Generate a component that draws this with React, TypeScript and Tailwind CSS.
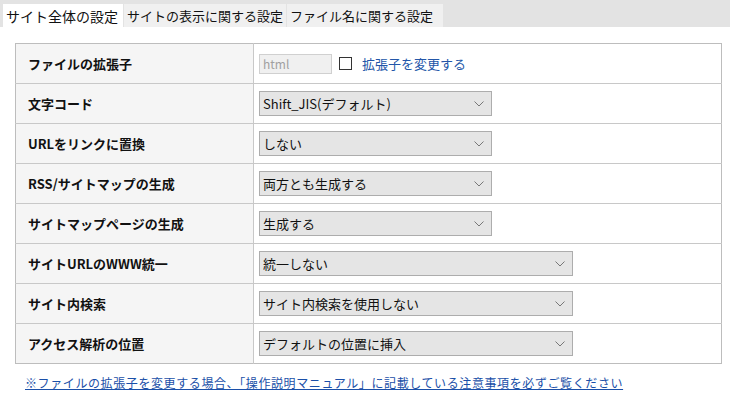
import React from 'react';

const tabs = ['サイト全体の設定', 'サイトの表示に関する設定', 'ファイル名に関する設定'];

interface Row {
  label: string;
  value: string;
  wide?: boolean;
}

const rows: Row[] = [
  { label: '文字コード', value: 'Shift_JIS(デフォルト)' },
  { label: 'URLをリンクに置換', value: 'しない' },
  { label: 'RSS/サイトマップの生成', value: '両方とも生成する' },
  { label: 'サイトマップページの生成', value: '生成する' },
  { label: 'サイトURLのWWW統一', value: '統一しない', wide: true },
  { label: 'サイト内検索', value: 'サイト内検索を使用しない', wide: true },
  { label: 'アクセス解析の位置', value: 'デフォルトの位置に挿入', wide: true },
];

function FakeSelect({ value, wide }: { value: string; wide?: boolean }) {
  return (
    <div
      className={`${wide ? 'w-[314px]' : 'w-[233px]'} h-[25px] border border-[#adadad] bg-[#e5e5e5] flex items-center justify-between pl-[3px] pr-[7px]`}
    >
      <span className="text-[13px] text-[#111] leading-none">{value}</span>
      <svg width="10" height="6" viewBox="0 0 10 6" className="text-[#777]">
        <path d="M0.5 0.5 L5 5 L9.5 0.5" fill="none" stroke="currentColor" strokeWidth="1" />
      </svg>
    </div>
  );
}

export default function App() {
  return (
    <div className="w-[730px] h-[404px] bg-white font-['Noto_Sans_CJK_JP',sans-serif] text-[#111]">
      {/* Tabs */}
      <div className="h-[27px] bg-[#e3e3e3] flex items-end pl-[3px] gap-[1px]">
        <div className="h-[23px] w-[120px] bg-white flex items-center px-[3px] text-[14px] leading-none">
          {tabs[0]}
        </div>
        <div className="h-[23px] w-[162px] bg-[#f0f0f0] flex items-center px-[3px] text-[13px] leading-none">
          {tabs[1]}
        </div>
        <div className="h-[23px] w-[156px] bg-[#f0f0f0] flex items-center px-[3px] text-[13px] leading-none">
          {tabs[2]}
        </div>
      </div>

      {/* Table */}
      <table className="mt-[16px] ml-[15px] w-[707px] border-collapse border border-[#bdbdbd]">
        <tbody>
          <tr className="h-[40px] border-b border-[#c8c8c8]">
            <td className="w-[238px] bg-[#f5f5f5] border-r border-[#c8c8c8] pl-[12px] text-[13px] font-bold">
              ファイルの拡張子
            </td>
            <td className="pl-[5px]">
              <div className="flex items-center">
                <div className="w-[73px] h-[20px] border border-[#d0d0d0] bg-[#f0f0f0] text-[12px] text-[#a0a0a0] flex items-center pl-[3px]">
                  html
                </div>
                <div className="ml-[7px] w-[13px] h-[13px] border border-[#333] bg-white" />
                <span className="ml-[10px] text-[13px] text-[#2356a8]">拡張子を変更する</span>
              </div>
            </td>
          </tr>
          {rows.map((r, idx) => (
            <tr
              key={r.label}
              className={`h-[40px] ${idx === rows.length - 1 ? '' : 'border-b border-[#c8c8c8]'}`}
            >
              <td className="w-[238px] bg-[#f5f5f5] border-r border-[#c8c8c8] pl-[12px] text-[13px] font-bold">
                {r.label}
              </td>
              <td className="pl-[5px]">
                <FakeSelect value={r.value} wide={r.wide} />
              </td>
            </tr>
          ))}
        </tbody>
      </table>

      {/* Footer link */}
      <div className="pl-[25px] mt-[5px]">
        <a className="text-[12px] text-[#1a4fa8] underline leading-none tracking-[0.6px]">
          ※ファイルの拡張子を変更する場合、「操作説明マニュアル」に記載している注意事項を必ずご覧ください
        </a>
      </div>
    </div>
  );
}
